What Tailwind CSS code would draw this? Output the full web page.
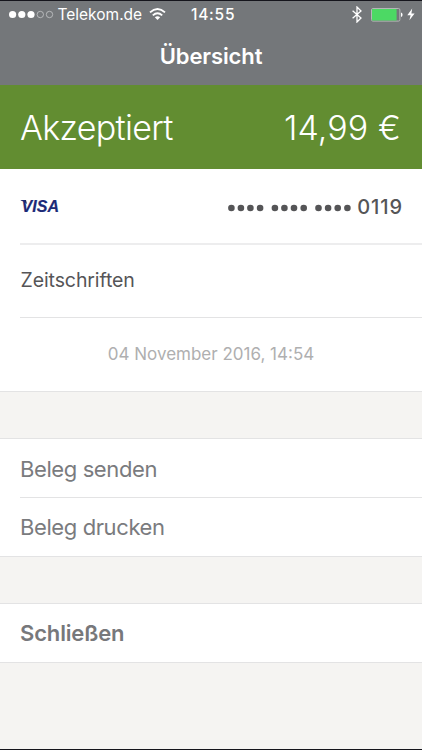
<!DOCTYPE html>
<html lang="de">
<head>
<meta charset="utf-8">
<title>Übersicht</title>
<script src="https://cdn.jsdelivr.net/npm/@tailwindcss/browser@4"></script>
</head>
<body class="w-[422px] h-[750px] overflow-hidden bg-[#f5f4f2] border-b border-[#15151c] font-['Inter','Liberation_Sans',sans-serif] whitespace-nowrap">
<header class="h-[85px] bg-[#74777a] border-t border-[#15151c] text-white flex flex-col">
  <div class="h-[27px] flex items-center pl-[9px] pr-[7px]">
    <svg class="w-[45px] h-[10px] shrink-0" viewBox="0 0 45 10">
      <g fill="#fff"><circle cx="3.6" cy="4.5" r="3.6"/><circle cx="12.8" cy="4.5" r="3.6"/><circle cx="22" cy="4.5" r="3.6"/></g>
      <g fill="none" stroke="#d0d1d2" stroke-width=".7"><circle cx="31.3" cy="4.5" r="3.2"/><circle cx="40.5" cy="4.5" r="3.2"/></g>
    </svg>
    <span class="ml-[3.5px] w-[91.5px] pt-px text-[15.5px]">Telekom.de</span>
    <svg class="w-[17px] h-[13px] shrink-0" viewBox="0 0 17 13">
      <g fill="none" stroke="#fff" stroke-width="1.9"><path d="M1 4.4Q8.5-2.2 16 4.4"/><path d="M3.8 7.4Q8.5 3.2 13.2 7.4"/></g>
      <path d="M5.8 9.3Q8.5 7.2 11.2 9.3L8.5 12Z" fill="#fff"/>
    </svg>
    <span class="ml-[25px] pt-px text-[15.5px] font-medium tracking-[0.75px]">14:55</span>
    <svg class="ml-auto w-[10px] h-[17px] shrink-0" viewBox="0 0 10 17" fill="none" stroke="#fff" stroke-width="1.3"><path d="M.6 4.7L9 12 5 16V1L9 5 .6 12.3"/></svg>
    <svg class="ml-[8px] w-[33px] h-[14px] shrink-0" viewBox="0 0 33 14">
      <rect x="1.5" y=".5" width="28.4" height="12.6" rx="1.4" fill="none" stroke="#b5b7b8" stroke-width="1"/>
      <rect x="2" y="1.1" width="24.6" height="11.4" rx=".6" fill="#4cd964"/>
      <path d="M31 4.5Q32.6 5 32.6 6.8T31 9.1Z" fill="#fff"/>
    </svg>
    <svg class="ml-[4px] w-[8px] h-[13px] shrink-0" viewBox="0 0 8 13"><path d="M5.2.5L.3 7.2H3.6L2.4 12.3 7.6 5.4H4.4Z" fill="#fff"/></svg>
  </div>
  <h1 class="h-[57px] flex items-center justify-center text-[22px] font-semibold tracking-[-0.1px]"><span>Übersicht</span></h1>
</header>
<main>
  <section class="h-[84px] bg-[#628d31] text-white flex items-center justify-between pl-5 pr-[21px]">
    <span class="text-[34px] tracking-[-0.7px] font-light">Akzeptiert</span><span class="text-[34px] tracking-[0.1px] font-light">14,99 €</span>
  </section>
  <section class="bg-white pl-5 border-b border-[#e3e3e4] text-[#555557]">
    <div class="h-[76px] flex items-center justify-between pr-5 border-b-2 border-[#ededee]">
      <svg class="w-[44px] h-[20px] overflow-visible" viewBox="0 0 44 20"><path d="M.7 4H6L7 8Q4.5 5 .7 4.5Z" fill="#262a63"/><text x="1.6" y="15.8" font-family="'Liberation Sans',sans-serif" font-size="17" font-weight="700" font-style="italic" fill="#1c2a78" stroke="#1c2a78" stroke-width=".2" textLength="37.4" lengthAdjust="spacingAndGlyphs">VISA</text></svg>
      <div class="flex items-center font-medium text-[20px]">
        <svg class="w-[124px] h-[8px] mt-[3px] mr-[5px]" viewBox="0 0 124 8" fill="#555557"><circle cx="3.4" cy="4" r="3.3"/><circle cx="12.9" cy="4" r="3.3"/><circle cx="22.4" cy="4" r="3.3"/><circle cx="32.1" cy="4" r="3.3"/><circle cx="46.9" cy="4" r="3.3"/><circle cx="56.4" cy="4" r="3.3"/><circle cx="66" cy="4" r="3.3"/><circle cx="75.7" cy="4" r="3.3"/><circle cx="90.5" cy="4" r="3.3"/><circle cx="100.1" cy="4" r="3.3"/><circle cx="109.7" cy="4" r="3.3"/><circle cx="119.4" cy="4" r="3.3"/></svg>
        <span class="pt-px tracking-[0.9px] -mr-[0.9px]">0119</span>
      </div>
    </div>
    <div class="h-[73px] flex items-center border-b border-[#e3e3e4] text-[19.5px] tracking-[-0.1px]"><span class="pl-[0.5px]">Zeitschriften</span></div>
    <div class="h-[73px] flex items-center justify-center pr-5 text-[17px] text-[#afafb0]"><span class="pt-px">04 November 2016, 14:54</span></div>
  </section>
  <section class="mt-[46px] bg-white pl-5 border-y border-[#e3e3e4] text-[22px] tracking-[-0.4px] text-[#7a7b7e]">
    <div class="h-[59px] flex items-center border-b border-[#e3e3e4]"><span class="pt-[2px]">Beleg senden</span></div>
    <div class="h-[58px] flex items-center"><span class="pt-px">Beleg drucken</span></div>
  </section>
  <section class="mt-[46px] h-[60px] bg-white pl-5 border-y border-[#e3e3e4] text-[22px] tracking-[-0.15px] font-semibold text-[#77787b] flex items-center"><span class="pt-px">Schließen</span></section>
</main>
</body>
</html>
